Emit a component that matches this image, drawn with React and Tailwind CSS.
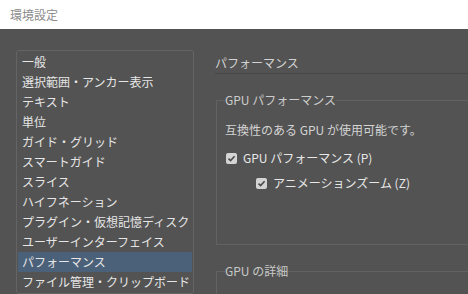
import { useState } from "react";

const categories = [
  "一般",
  "選択範囲・アンカー表示",
  "テキスト",
  "単位",
  "ガイド・グリッド",
  "スマートガイド",
  "スライス",
  "ハイフネーション",
  "プラグイン・仮想記憶ディスク",
  "ユーザーインターフェイス",
  "パフォーマンス",
  "ファイル管理・クリップボード",
];

function Check({ checked }) {
  return (
    <span className="grid h-[11px] w-[11px] shrink-0 place-items-center rounded-[2px] bg-[#d4d4d4]">
      {checked && (
        <svg width="9" height="9" viewBox="0 0 9 9" fill="none">
          <path d="M1.5 4.6 L3.6 6.6 L7.6 2.2" stroke="#4a4a4a" strokeWidth="1.6" />
        </svg>
      )}
    </span>
  );
}

export default function App() {
  const [selected, setSelected] = useState("パフォーマンス");
  const [gpu, setGpu] = useState(true);
  const [zoom, setZoom] = useState(true);

  return (
    <div
      className="flex h-screen flex-col overflow-hidden bg-[#535353] text-[12px] leading-[16px]"
      style={{ fontFamily: '"Noto Sans CJK JP", "Noto Sans", sans-serif' }}
    >
      <header className="h-[29px] shrink-0 bg-white pl-[10px] pt-[7px] text-[12px] text-[#8c8c8c]">
        環境設定
      </header>

      <div className="flex min-h-0 flex-1 pt-[21px]">
        <aside className="ml-[16px] w-[178px] shrink-0 rounded-[3px] border border-[#646464] px-px pt-px">
          {categories.map((c) => (
            <button
              key={c}
              onClick={() => setSelected(c)}
              className={
                "block h-[20px] w-full whitespace-nowrap pl-[4px] text-left leading-[20px] text-[#e6e6e6] " +
                (selected === c ? "bg-[#4b6079]" : "")
              }
            >
              {c}
            </button>
          ))}
        </aside>

        <main className="ml-[21px] min-w-0 flex-1">
          <div className="border-b border-[#474747] pb-[2px] pt-[5px] text-[12px] text-[#d2d2d2]">
            パフォーマンス
          </div>

          <fieldset className="ml-px mt-[18px] h-[153px] border border-r-0 border-[#626262] pl-[8px]">
            <legend className="text-[#cdcdcd]">GPU パフォーマンス</legend>
            <p className="mt-[14px] text-[#d4d4d4]">互換性のある GPU が使用可能です。</p>
            <button
              onClick={() => setGpu(!gpu)}
              className="mt-[12px] flex items-center gap-[6px] pl-px text-[#e8e8e8]"
            >
              <Check checked={gpu} />
              GPU パフォーマンス (P)
            </button>
            <button
              onClick={() => setZoom(!zoom)}
              className="ml-[31px] mt-[9px] flex items-center gap-[6px] text-[#e8e8e8]"
            >
              <Check checked={zoom} />
              アニメーションズーム (Z)
            </button>
          </fieldset>

          <fieldset className="ml-px mt-[18px] h-[60px] border border-r-0 border-[#626262] pl-[8px]">
            <legend className="text-[#c8c8c8]">GPU の詳細</legend>
          </fieldset>
        </main>
      </div>
    </div>
  );
}
